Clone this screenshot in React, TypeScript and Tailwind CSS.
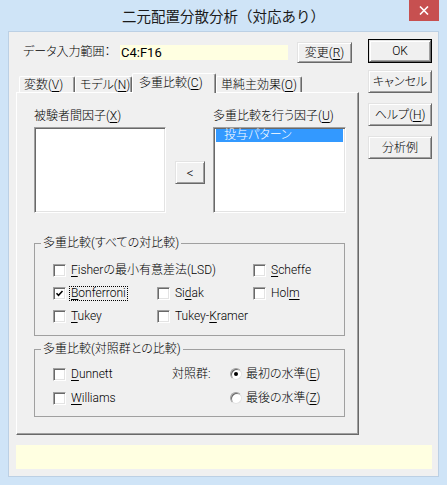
import type { ReactNode } from "react";

const raised =
  "bg-[#f0f0f0] border border-t-[#e3e3e3] border-l-[#e3e3e3] border-r-[#696969] border-b-[#696969] shadow-[inset_1px_1px_0_#fff,inset_-1px_-1px_0_#a0a0a0]";
const sunken =
  "bg-white border border-t-[#a0a0a0] border-l-[#a0a0a0] border-r-white border-b-white shadow-[inset_1px_1px_0_#696969,inset_-1px_-1px_0_#e3e3e3]";

function U({ c }: { c: string }) {
  return <span className="underline decoration-1 underline-offset-[2px]">{c}</span>;
}

function Button({ children, className = "" }: { children: ReactNode; className?: string }) {
  return (
    <div className={`flex items-center justify-center text-[12px] leading-none ${raised} ${className}`}>
      {children}
    </div>
  );
}

function Box({ on }: { on?: boolean }) {
  return (
    <span className={`flex h-[13px] w-[13px] shrink-0 items-center justify-center ${sunken}`}>
      {on && (
        <svg width="9" height="9" viewBox="0 0 9 9">
          <path d="M1.5 4.2 L3.5 6.3 L7.5 2" fill="none" stroke="#000" strokeWidth="1.5" />
        </svg>
      )}
    </span>
  );
}

function CheckItem({
  on,
  focus,
  w = "",
  children,
}: {
  on?: boolean;
  focus?: boolean;
  w?: string;
  children: ReactNode;
}) {
  return (
    <div className={`flex items-center gap-[3px] ${w}`}>
      <Box on={on} />
      <span
        className={`border px-[1px] leading-[13px] ${focus ? "border-dotted border-black" : "border-transparent"}`}
      >
        {children}
      </span>
    </div>
  );
}

function Radio({ on }: { on?: boolean }) {
  return (
    <span className="flex h-[12px] w-[12px] shrink-0 items-center justify-center rounded-full border border-t-[#a0a0a0] border-l-[#a0a0a0] border-r-[#e3e3e3] border-b-[#e3e3e3] bg-white shadow-[inset_1px_1px_0_#696969]">
      {on && <span className="h-[4px] w-[4px] rounded-full bg-black" />}
    </span>
  );
}

function Tab({ w, children }: { w: string; children: ReactNode }) {
  return (
    <div
      className={`h-[16px] rounded-t-[2px] border-t border-l border-r border-t-white border-l-white border-r-[#696969] pl-[4px] leading-[16px] shadow-[inset_-1px_0_0_#a0a0a0] ${w}`}
    >
      {children}
    </div>
  );
}

export default function App() {
  return (
    <div className="flex h-[485px] w-[447px] flex-col bg-[#cfe4f7] font-['Roboto','Noto_Sans_CJK_JP',sans-serif] text-[12px] font-light text-black [font-feature-settings:'palt']">
      {/* title bar */}
      <div className="grid h-[31px] shrink-0 grid-cols-[1fr_auto_1fr] items-start">
        <div />
        <div className="pt-[6px] font-['Noto_Sans_CJK_JP',sans-serif] text-[14.5px] font-normal leading-[20px] text-[#1a1a1a] [font-feature-settings:normal]">
          二元配置分散分析（対応あり）
        </div>
        <div className="flex justify-end pr-[8px]">
          <div className="flex h-[21px] w-[30px] items-center justify-center bg-[#c75050]">
            <svg width="10" height="9" viewBox="0 0 10 9">
              <path d="M1 0.5 L9 8.5 M9 0.5 L1 8.5" stroke="#fff" strokeWidth="1.6" />
            </svg>
          </div>
        </div>
      </div>

      {/* client area */}
      <div className="mx-[8px] flex h-[446px] flex-col border border-[#bcd0e4] bg-[#f0f0f0] pl-[7px] pr-[6px]">
        <div className="flex items-start gap-[9px]">
          {/* left side */}
          <div className="flex w-[343px] flex-col">
            <div className="mt-[10px] flex h-[21px] items-center pl-[7px]">
              <div className="w-[97px] leading-[13px]">データ入力範囲：</div>
              <div className="h-[15px] w-[168px] bg-[#ffffe1] pl-[1px] text-[13px] font-normal leading-[15px]">C4:F16</div>
              <Button className="ml-[9px] h-[21px] w-[55px]">
                変更(<U c="R" />)
              </Button>
            </div>

            {/* tabs */}
            <div className="mt-[10px] flex h-[19px] items-end pl-[3px]">
              <Tab w="w-[56px]">
                変数(<U c="V" />)
              </Tab>
              <Tab w="w-[57px]">
                モデル(<U c="N" />)
              </Tab>
              <div className="relative z-10 -mb-[1px] h-[20px] w-[84px] rounded-t-[2px] border-t border-l border-r border-t-white border-l-white border-r-[#696969] bg-[#f0f0f0] pl-[6px] pt-[1px] leading-[16px] shadow-[inset_-1px_0_0_#a0a0a0]">
                多重比較(<U c="C" />)
              </div>
              <Tab w="w-[86px]">
                単純主効果(<U c="O" />)
              </Tab>
            </div>

            {/* tab panel */}
            <div className="h-[343px] border border-t-white border-l-white border-r-[#696969] border-b-[#696969] pl-[17px] pt-[17px] shadow-[inset_-1px_-1px_0_#a0a0a0]">
              <div className="flex items-start">
                <div className="flex w-[132px] flex-col">
                  <div className="mb-[4px] h-[13px] leading-[13px]">
                    被験者間因子(<U c="X" />)
                  </div>
                  <div className={`h-[86px] w-[132px] ${sunken}`} />
                </div>
                <Button className="ml-[9px] mt-[51px] h-[23px] w-[30px] text-[14px]">&lt;</Button>
                <div className="ml-[8px] flex w-[133px] flex-col">
                  <div className="mb-[4px] h-[13px] whitespace-nowrap leading-[13px]">
                    多重比較を行う因子(<U c="U" />)
                  </div>
                  <div className={`h-[86px] w-[133px] p-[2px] pt-[1px] ${sunken}`}>
                    <div className="h-[13px] bg-[#3399ff] pl-[8px] leading-[13px] text-white">投与パターン</div>
                  </div>
                </div>
              </div>

              {/* all pairwise */}
              <fieldset className="mt-[24px] w-[311px] border border-[#a0a0a0]">
                <legend className="ml-[6px] px-[2px] leading-[13px]">多重比較(すべての対比較)</legend>
                <div className="flex flex-col pb-[7px] pl-[18px] pt-[9px]">
                  <div className="flex h-[23px] items-center">
                    <CheckItem w="w-[200px]">
                      <U c="F" />
                      isherの最小有意差法(LSD)
                    </CheckItem>
                    <CheckItem>
                      <U c="S" />
                      cheffe
                    </CheckItem>
                  </div>
                  <div className="flex h-[23px] items-center">
                    <CheckItem on focus w="w-[104px]">
                      <U c="B" />
                      onferroni
                    </CheckItem>
                    <CheckItem w="w-[96px]">
                      Si<U c="d" />
                      ak
                    </CheckItem>
                    <CheckItem>
                      Hol<U c="m" />
                    </CheckItem>
                  </div>
                  <div className="flex h-[23px] items-center">
                    <CheckItem w="w-[104px]">
                      <U c="T" />
                      ukey
                    </CheckItem>
                    <CheckItem>
                      Tukey-<U c="K" />
                      ramer
                    </CheckItem>
                  </div>
                </div>
              </fieldset>

              {/* vs control */}
              <fieldset className="mt-[7px] w-[311px] border border-[#a0a0a0]">
                <legend className="ml-[6px] px-[2px] leading-[13px]">多重比較(対照群との比較)</legend>
                <div className="flex flex-col pb-[6px] pl-[18px] pt-[6px]">
                  <div className="flex h-[24px] items-center">
                    <CheckItem w="w-[119px]">
                      <U c="D" />
                      unnett
                    </CheckItem>
                    <div className="w-[58px] leading-[13px]">対照群:</div>
                    <div className="flex items-center gap-[4px]">
                      <Radio on />
                      <span className="leading-[13px]">
                        最初の水準(<U c="E" />)
                      </span>
                    </div>
                  </div>
                  <div className="flex h-[24px] items-center">
                    <CheckItem w="w-[119px]">
                      <U c="W" />
                      illiams
                    </CheckItem>
                    <div className="w-[58px]" />
                    <div className="flex items-center gap-[4px]">
                      <Radio />
                      <span className="leading-[13px]">
                        最後の水準(<U c="Z" />)
                      </span>
                    </div>
                  </div>
                </div>
              </fieldset>
            </div>
          </div>

          {/* right buttons */}
          <div className="flex w-[64px] flex-col pt-[7px]">
            <div className="h-[24px] border border-black">
              <Button className="h-full w-full">OK</Button>
            </div>
            <Button className="mt-[7px] h-[23px]">キャンセル</Button>
            <Button className="mt-[10px] h-[23px]">
              ヘルプ(<U c="H" />)
            </Button>
            <Button className="mt-[10px] h-[23px]">分析例</Button>
          </div>
        </div>

        {/* status bar */}
        <div className="mt-[10px] h-[24px] bg-[#ffffe1]" />
      </div>
    </div>
  );
}
